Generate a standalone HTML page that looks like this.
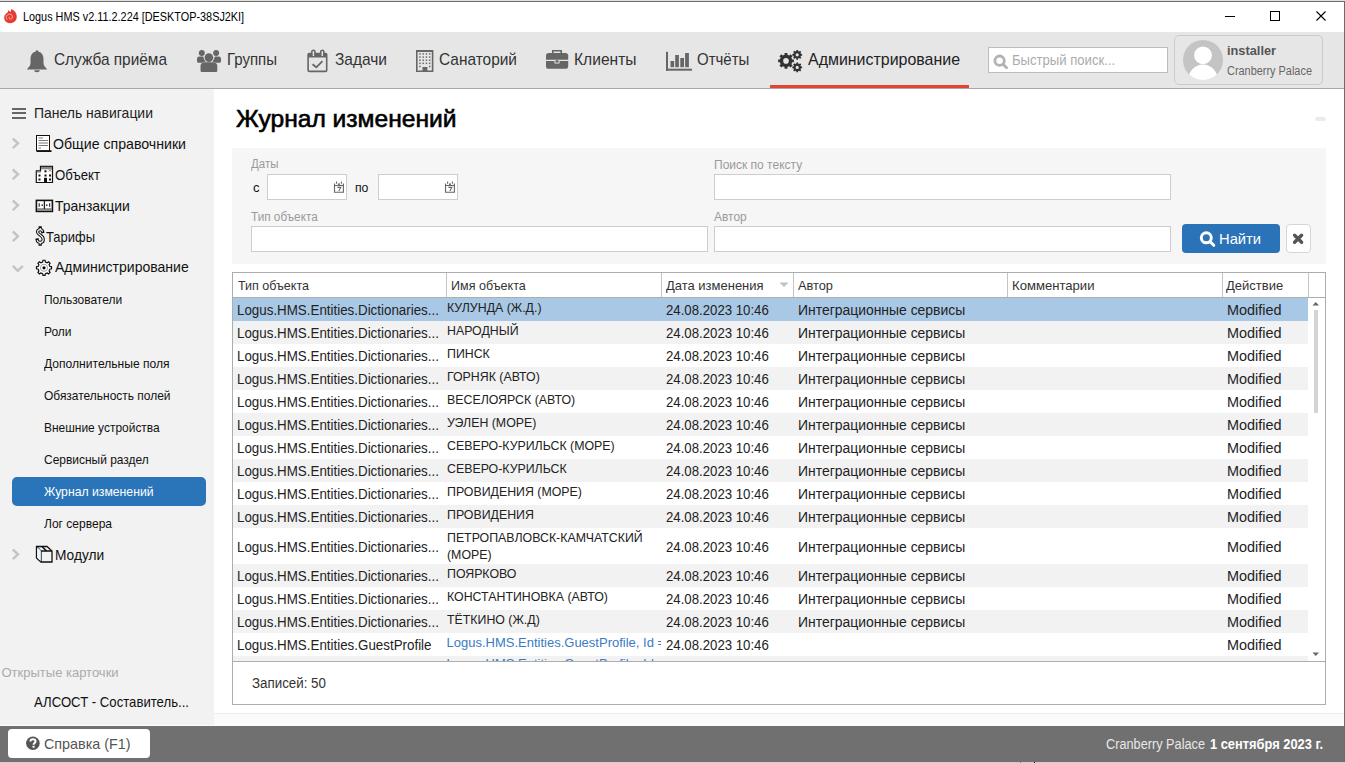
<!DOCTYPE html>
<html><head><meta charset="utf-8">
<style>
*{margin:0;padding:0;box-sizing:border-box}
html,body{width:1345px;height:763px;overflow:hidden;background:#fff;font-family:"Liberation Sans",sans-serif;color:#222;position:relative}
.a{position:absolute}
.t{position:absolute;white-space:nowrap;line-height:1}
svg{position:absolute;overflow:visible}
</style></head><body>
<div class="a" style="left:0px;top:0px;width:1345px;height:1px;background:#e0e0e0;"></div>
<div class="a" style="left:0px;top:1px;width:1345px;height:1px;background:#6f6f6f;"></div>
<svg style="left:3px;top:8px" width="15" height="16" viewBox="0 0 15 16"><g fill="#e43c35"><path d="M8.5 1 C13 3 15 8 13 12 C11.5 15 7 16 4 14.5 C1 13 0.5 9 2 7 C3 5 4.5 4.5 5 4 L5 2 C6 3 7 3.5 7.5 4 Z"/></g><g fill="none" stroke="#f7b0ab" stroke-width="0.9"><path d="M4.5 12 C2.5 10 3 7.5 5 6.5 C7 5.5 9.5 6.5 9.5 9 C9.5 10.5 8 11.5 6.8 11 C5.8 10.5 6 9 7 9"/></g></svg>
<div class="t" style="left:22.50px;top:10.80px;font-size:12px;color:#000;font-weight:400;transform:scaleX(0.905);transform-origin:0 0;">Logus HMS v2.11.2.224 [DESKTOP-38SJ2KI]</div>
<div class="a" style="left:1225px;top:16px;width:10px;height:1px;background:#000;"></div>
<div class="a" style="left:1270px;top:11px;width:10px;height:10px;background:transparent;border:1px solid #000;"></div>
<svg style="left:1316px;top:11px" width="10" height="10" viewBox="0 0 10 10"><path d="M0.5 0.5L9.5 9.5M9.5 0.5L0.5 9.5" stroke="#000" stroke-width="1.1"/></svg>
<div class="a" style="left:0px;top:32px;width:1344px;height:56px;background:#e6e6e6;"></div>
<div class="a" style="left:0px;top:88px;width:1344px;height:1px;background:#a8a8a8;"></div>
<div class="a" style="left:770px;top:85px;width:199px;height:3px;background:#e3432f;"></div>
<svg style="left:26px;top:49px" width="22" height="24" viewBox="0 0 22 24"><path fill="#666" d="M11 1.2 C11.9 1.2 12.3 1.8 12.3 2.5 C15.8 3.3 17.5 6.3 17.5 10 L17.5 14.5 C17.5 16.5 19.5 18.5 21.3 20.5 L0.7 20.5 C2.5 18.5 4.5 16.5 4.5 14.5 L4.5 10 C4.5 6.3 6.2 3.3 9.7 2.5 C9.7 1.8 10.1 1.2 11 1.2Z M8.2 21.3 L13.8 21.3 C13.8 23 12.6 23.2 11 23.2 C9.4 23.2 8.2 23 8.2 21.3Z"/></svg>
<div class="t" style="left:54.00px;top:51.15px;font-size:17px;color:#333;font-weight:400;transform:scaleX(0.906);transform-origin:0 0;">Служба приёма</div>
<svg style="left:196px;top:49px" width="26" height="24" viewBox="0 0 26 24"><g fill="#666"><circle cx="5.8" cy="3.9" r="3"/><circle cx="20.1" cy="3.9" r="3"/><circle cx="12.9" cy="8.6" r="4.3"/><path d="M1 9.5 C1 8 2.5 7.5 4 7.5 L7.2 7.5 C7.8 9.8 8.5 11.5 9.8 12.6 C8 13.3 7 13.8 6.5 13.8 L2.5 13.8 C1.5 13.8 1 13 1 12Z"/><path d="M25 9.5 C25 8 23.5 7.5 22 7.5 L18.8 7.5 C18.2 9.8 17.5 11.5 16.2 12.6 C18 13.3 19 13.8 19.5 13.8 L23.5 13.8 C24.5 13.8 25 13 25 12Z"/><path d="M4.5 17 C4.5 14.5 6.5 13.3 8.5 13.3 L17.3 13.3 C19.3 13.3 21.3 14.5 21.3 17 L21.3 21.5 C21.3 22.5 20.5 23 19.5 23 L6.3 23 C5.3 23 4.5 22.5 4.5 21.5Z"/></g></svg>
<div class="t" style="left:227.00px;top:51.15px;font-size:17px;color:#333;font-weight:400;transform:scaleX(0.883);transform-origin:0 0;">Группы</div>
<svg style="left:306px;top:49px" width="23" height="24" viewBox="0 0 23 24"><g fill="none" stroke="#666" stroke-width="1.6"><rect x="2.1" y="4.6" width="18.6" height="17.8" rx="1.2"/><path d="M5.9 6.5 L5.9 2.6 C5.9 1.6 6.6 1.3 7.4 1.3 C8.2 1.3 8.9 1.6 8.9 2.6 L8.9 6.5 M14.8 6.5 L14.8 2.6 C14.8 1.6 15.5 1.3 16.3 1.3 C17.1 1.3 17.8 1.6 17.8 2.6 L17.8 6.5"/><path d="M6.5 15.3 L10.3 18.3 L16.5 12.1" stroke-width="1.8"/></g><path fill="#666" d="M2.1 4 L20.7 4 L20.7 8.6 L2.1 8.6Z M5.1 4 L9.7 4 L9.7 6.8 L5.1 6.8Z"/><path fill="#e6e6e6" d="M6.7 3 L8.1 3 L8.1 7 L6.7 7Z M15.6 3 L17 3 L17 7 L15.6 7Z"/></svg>
<div class="t" style="left:334.50px;top:51.15px;font-size:17px;color:#333;font-weight:400;transform:scaleX(0.911);transform-origin:0 0;">Задачи</div>
<svg style="left:415px;top:49px" width="20" height="24" viewBox="0 0 20 24"><g fill="#666"><path d="M1 1 L18.4 1 L18.4 22.9 L1 22.9Z M2.6 3 L2.6 21.4 L7.5 21.4 L7.5 18 L12.4 18 L12.4 21.4 L16.8 21.4 L16.8 3Z"/><g><rect x="4.20" y="4.20" width="1.5" height="1.4"/><rect x="4.20" y="7.35" width="1.5" height="1.4"/><rect x="4.20" y="10.50" width="1.5" height="1.4"/><rect x="4.20" y="13.65" width="1.5" height="1.4"/><rect x="7.45" y="4.20" width="1.5" height="1.4"/><rect x="7.45" y="7.35" width="1.5" height="1.4"/><rect x="7.45" y="10.50" width="1.5" height="1.4"/><rect x="7.45" y="13.65" width="1.5" height="1.4"/><rect x="10.70" y="4.20" width="1.5" height="1.4"/><rect x="10.70" y="7.35" width="1.5" height="1.4"/><rect x="10.70" y="10.50" width="1.5" height="1.4"/><rect x="10.70" y="13.65" width="1.5" height="1.4"/><rect x="13.95" y="4.20" width="1.5" height="1.4"/><rect x="13.95" y="7.35" width="1.5" height="1.4"/><rect x="13.95" y="10.50" width="1.5" height="1.4"/><rect x="13.95" y="13.65" width="1.5" height="1.4"/><rect x="4.2" y="16.8" width="1.5" height="1.4"/><rect x="13.95" y="16.8" width="1.5" height="1.4"/></g></g></svg>
<div class="t" style="left:439.00px;top:51.15px;font-size:17px;color:#333;font-weight:400;transform:scaleX(0.908);transform-origin:0 0;">Санаторий</div>
<svg style="left:545px;top:49px" width="24" height="21" viewBox="0 0 24 21"><g fill="#666"><path d="M7 1 L17 1 L17 4.2 L15.4 4.2 L15.4 2.5 L8.6 2.5 L8.6 4.2 L7 4.2Z"/><path d="M1 6.5 C1 5 2 4 3.5 4 L20.5 4 C22 4 23.2 5 23.2 6.5 L23.2 10.8 L1 10.8Z"/><path d="M1 12 L9.5 12 L9.5 14.6 L14.5 14.6 L14.5 12 L23.2 12 L23.2 17.5 C23.2 19 22 19.8 20.5 19.8 L3.5 19.8 C2 19.8 1 19 1 17.5Z"/><rect x="10.5" y="11.2" width="3" height="2.4"/></g></svg>
<div class="t" style="left:573.50px;top:51.15px;font-size:17px;color:#333;font-weight:400;transform:scaleX(0.917);transform-origin:0 0;">Клиенты</div>
<svg style="left:665px;top:49px" width="28" height="23" viewBox="0 0 28 23"><g fill="#666"><rect x="1" y="2.8" width="2" height="19"/><rect x="1" y="19.7" width="26" height="2"/><rect x="5.5" y="12" width="3.6" height="6.2"/><rect x="10.2" y="6" width="3.7" height="12.2"/><rect x="15.3" y="9" width="3.7" height="9.2"/><rect x="20.1" y="4" width="3.8" height="14.2"/></g></svg>
<div class="t" style="left:697.00px;top:51.15px;font-size:17px;color:#333;font-weight:400;transform:scaleX(0.883);transform-origin:0 0;">Отчёты</div>
<svg style="left:776px;top:48px" width="28" height="26" viewBox="0 0 28 26"><path fill="#333" fill-rule="evenodd" d="M16.13 11.46 L17.86 11.44 L17.86 14.36 L16.13 14.34 L15.35 16.22 L16.60 17.43 L14.53 19.50 L13.32 18.25 L11.44 19.03 L11.46 20.76 L8.54 20.76 L8.56 19.03 L6.68 18.25 L5.47 19.50 L3.40 17.43 L4.65 16.22 L3.87 14.34 L2.14 14.36 L2.14 11.44 L3.87 11.46 L4.65 9.58 L3.40 8.37 L5.47 6.30 L6.68 7.55 L8.56 6.77 L8.54 5.04 L11.46 5.04 L11.44 6.77 L13.32 7.55 L14.53 6.30 L16.60 8.37 L15.35 9.58Z M12.80 12.90 A2.8 2.8 0 1 0 7.20 12.90 A2.8 2.8 0 1 0 12.80 12.90Z"/><path fill="#333" fill-rule="evenodd" d="M25.01 5.95 L26.12 5.92 L26.12 7.68 L25.01 7.65 L24.49 8.89 L25.30 9.66 L24.06 10.90 L23.29 10.09 L22.05 10.61 L22.08 11.72 L20.32 11.72 L20.35 10.61 L19.11 10.09 L18.34 10.90 L17.10 9.66 L17.91 8.89 L17.39 7.65 L16.28 7.68 L16.28 5.92 L17.39 5.95 L17.91 4.71 L17.10 3.94 L18.34 2.70 L19.11 3.51 L20.35 2.99 L20.32 1.88 L22.08 1.88 L22.05 2.99 L23.29 3.51 L24.06 2.70 L25.30 3.94 L24.49 4.71Z M22.80 6.80 A1.6 1.6 0 1 0 19.60 6.80 A1.6 1.6 0 1 0 22.80 6.80Z"/><path fill="#333" fill-rule="evenodd" d="M25.01 18.55 L26.12 18.52 L26.12 20.28 L25.01 20.25 L24.49 21.49 L25.30 22.26 L24.06 23.50 L23.29 22.69 L22.05 23.21 L22.08 24.32 L20.32 24.32 L20.35 23.21 L19.11 22.69 L18.34 23.50 L17.10 22.26 L17.91 21.49 L17.39 20.25 L16.28 20.28 L16.28 18.52 L17.39 18.55 L17.91 17.31 L17.10 16.54 L18.34 15.30 L19.11 16.11 L20.35 15.59 L20.32 14.48 L22.08 14.48 L22.05 15.59 L23.29 16.11 L24.06 15.30 L25.30 16.54 L24.49 17.31Z M22.80 19.40 A1.6 1.6 0 1 0 19.60 19.40 A1.6 1.6 0 1 0 22.80 19.40Z"/></svg>
<div class="t" style="left:807.50px;top:51.15px;font-size:17px;color:#222;font-weight:400;transform:scaleX(0.938);transform-origin:0 0;">Администрирование</div>
<div class="a" style="left:988px;top:47px;width:180px;height:26px;background:#fff;border:1px solid #bdbdbd;"></div>
<svg style="left:992px;top:54px" width="18" height="16" viewBox="0 0 18 16"><g fill="none" stroke="#b3b3b3" stroke-width="2.8"><circle cx="7.6" cy="6.7" r="4.7"/><path d="M11 10.2 L14.6 13.8" stroke-linecap="round"/></g></svg>
<div class="t" style="left:1011.50px;top:52.45px;font-size:15px;color:#ababab;font-weight:400;transform:scaleX(0.873);transform-origin:0 0;">Быстрый поиск...</div>
<div class="a" style="left:1174px;top:35px;width:149px;height:50px;background:#e6e6e6;border:1px solid #cbcbcb;border-radius:5px;"></div>
<svg style="left:1183px;top:40px" width="40" height="40" viewBox="0 0 40 40"><defs><clipPath id="av"><circle cx="20" cy="20" r="20"/></clipPath></defs><circle cx="20" cy="20" r="20" fill="#c4c4c4"/><g clip-path="url(#av)" fill="#fff"><circle cx="20" cy="15.3" r="8.9"/><ellipse cx="20" cy="41" rx="15" ry="16.5"/></g></svg>
<div class="t" style="left:1226.50px;top:43.75px;font-size:13px;color:#555;font-weight:700;transform:scaleX(0.983);transform-origin:0 0;">installer</div>
<div class="t" style="left:1226.50px;top:64.60px;font-size:12px;color:#666;font-weight:400;transform:scaleX(0.91);transform-origin:0 0;">Cranberry Palace</div>
<div class="a" style="left:1344px;top:1px;width:1px;height:762px;background:#6b6b6b;"></div>
<div class="a" style="left:0px;top:89px;width:214px;height:637px;background:#f2f2f2;"></div>
<div class="a" style="left:12px;top:108px;width:14px;height:2px;background:#666;"></div>
<div class="a" style="left:12px;top:112px;width:14px;height:2px;background:#666;"></div>
<div class="a" style="left:12px;top:117px;width:14px;height:2px;background:#666;"></div>
<div class="t" style="left:33.50px;top:104.95px;font-size:15px;color:#222;font-weight:400;transform:scaleX(0.931);transform-origin:0 0;">Панель навигации</div>
<svg style="left:11px;top:137px" width="10" height="13" viewBox="0 0 10 13"><path d="M1.8 1.5 L7 6.3 L1.8 11.1" fill="none" stroke="#c4c4c4" stroke-width="2.4"/></svg>
<svg style="left:11px;top:168px" width="10" height="13" viewBox="0 0 10 13"><path d="M1.8 1.5 L7 6.3 L1.8 11.1" fill="none" stroke="#c4c4c4" stroke-width="2.4"/></svg>
<svg style="left:11px;top:199px" width="10" height="13" viewBox="0 0 10 13"><path d="M1.8 1.5 L7 6.3 L1.8 11.1" fill="none" stroke="#c4c4c4" stroke-width="2.4"/></svg>
<svg style="left:11px;top:230px" width="10" height="13" viewBox="0 0 10 13"><path d="M1.8 1.5 L7 6.3 L1.8 11.1" fill="none" stroke="#c4c4c4" stroke-width="2.4"/></svg>
<svg style="left:11px;top:548px" width="10" height="13" viewBox="0 0 10 13"><path d="M1.8 1.5 L7 6.3 L1.8 11.1" fill="none" stroke="#c4c4c4" stroke-width="2.4"/></svg>
<svg style="left:11px;top:264px" width="14" height="10" viewBox="0 0 14 10"><path d="M1.8 1.8 L6.8 6.8 L11.8 1.8" fill="none" stroke="#c4c4c4" stroke-width="2.4"/></svg>
<svg style="left:35px;top:134px" width="18" height="19" viewBox="0 0 18 19"><rect x="1.5" y="1.5" width="13" height="15.5" fill="#fff" stroke="#111" stroke-width="1"/><g stroke="#777" stroke-width="1"><path d="M3.5 4 L8 4 M3.5 6.5 L13 6.5 M3.5 9 L13 9 M3.5 11.5 L13 11.5 M3.5 14 L6 14"/></g><path d="M2 16.2 L16.5 16.2 L16.5 18 L2 18Z" fill="#111"/></svg>
<div class="t" style="left:53.00px;top:135.95px;font-size:15px;color:#111;font-weight:400;transform:scaleX(0.943);transform-origin:0 0;">Общие справочники</div>
<svg style="left:35px;top:165px" width="19" height="19" viewBox="0 0 19 19"><path d="M5.5 1.3 L17.5 1.3 L17.5 17.5 L1.3 17.5 L1.3 5.8 L5.5 5.8Z" fill="#fff" stroke="#111" stroke-width="1.2"/><rect x="6" y="1.8" width="11" height="2.5" fill="#888"/><rect x="1.8" y="6" width="4" height="1.6" fill="#888"/><g fill="#111"><rect x="9.5" y="5.3" width="2" height="2"/><rect x="3.5" y="9.5" width="2" height="2"/><rect x="9.5" y="9.5" width="2" height="2"/><rect x="14" y="9.5" width="2" height="2"/><rect x="3.5" y="13.5" width="2" height="2"/><rect x="14" y="13.5" width="2" height="2"/><rect x="9" y="12.8" width="3" height="4.5"/></g><path d="M14 4.5 L16 6.5 M16 4.5 L14 6.5" stroke="#555" stroke-width=".8"/></svg>
<div class="t" style="left:55.00px;top:167.25px;font-size:15px;color:#111;font-weight:400;transform:scaleX(0.881);transform-origin:0 0;">Объект</div>
<svg style="left:35px;top:199px" width="19" height="14" viewBox="0 0 19 14"><rect x="1.4" y="1.4" width="16" height="11" fill="#fff" stroke="#111" stroke-width="1.6"/><rect x="2" y="9.2" width="15" height="2.6" fill="#888"/><path d="M9.4 2 L9.4 10" stroke="#222" stroke-width="1.3"/><g fill="#333"><rect x="3.6" y="4.2" width="1.2" height="3.6"/><rect x="6.5" y="5.5" width="1.5" height="1.5"/><rect x="11" y="5.5" width="1.5" height="1.5"/><rect x="14" y="4.2" width="1.2" height="3.6"/></g></svg>
<div class="t" style="left:55.00px;top:198.45px;font-size:15px;color:#111;font-weight:400;transform:scaleX(0.93);transform-origin:0 0;">Транзакции</div>
<svg style="left:35px;top:227px" width="11" height="19" viewBox="0 0 11 19"><path d="M7.6 4.6 C7.3 3.3 6.4 2.6 5.2 2.6 C3.6 2.6 2.6 3.6 2.6 5 C2.6 6.6 3.9 7.3 5.4 8.2 C7.1 9.2 8.2 10.2 8.2 12.4 C8.2 14.2 6.9 15.4 5.2 15.4 C3.6 15.4 2.5 14.5 2.2 13 M5.2 0.9 L5.2 2.6 M5.2 15.4 L5.2 17.2" fill="none" stroke="#111" stroke-width="3.3" stroke-linecap="square"/><path d="M7.6 4.6 C7.3 3.3 6.4 2.6 5.2 2.6 C3.6 2.6 2.6 3.6 2.6 5 C2.6 6.6 3.9 7.3 5.4 8.2 C7.1 9.2 8.2 10.2 8.2 12.4 C8.2 14.2 6.9 15.4 5.2 15.4 C3.6 15.4 2.5 14.5 2.2 13 M5.2 0.9 L5.2 2.6 M5.2 15.4 L5.2 17.2" fill="none" stroke="#fff" stroke-width="1.1"/></svg>
<div class="t" style="left:46.00px;top:229.25px;font-size:15px;color:#111;font-weight:400;transform:scaleX(0.864);transform-origin:0 0;">Тарифы</div>
<svg style="left:35px;top:259px" width="18" height="18" viewBox="0 0 18 18"><path d="M7.63 2.96 L7.95 1.27 L10.05 1.27 L10.37 2.96 L12.16 3.70 L13.58 2.74 L15.06 4.22 L14.10 5.64 L14.84 7.43 L16.53 7.75 L16.53 9.85 L14.84 10.17 L14.10 11.96 L15.06 13.38 L13.58 14.86 L12.16 13.90 L10.37 14.64 L10.05 16.33 L7.95 16.33 L7.63 14.64 L5.84 13.90 L4.42 14.86 L2.94 13.38 L3.90 11.96 L3.16 10.17 L1.47 9.85 L1.47 7.75 L3.16 7.43 L3.90 5.64 L2.94 4.22 L4.42 2.74 L5.84 3.70Z" fill="#fff" stroke="#111" stroke-width="1.2"/><circle cx="9" cy="8.8" r="3.6" fill="none" stroke="#999" stroke-width=".9"/><circle cx="9" cy="8.8" r="1.6" fill="#000"/></svg>
<div class="t" style="left:55.00px;top:259.25px;font-size:15px;color:#111;font-weight:400;transform:scaleX(0.935);transform-origin:0 0;">Администрирование</div>
<div class="a" style="left:12px;top:477px;width:194px;height:29px;background:#2a75b9;border-radius:5px;"></div>
<div class="t" style="left:43.50px;top:293.15px;font-size:13px;color:#111;font-weight:400;transform:scaleX(0.92);transform-origin:0 0;">Пользователи</div>
<div class="t" style="left:43.50px;top:325.15px;font-size:13px;color:#111;font-weight:400;transform:scaleX(0.92);transform-origin:0 0;">Роли</div>
<div class="t" style="left:43.50px;top:357.15px;font-size:13px;color:#111;font-weight:400;transform:scaleX(0.93);transform-origin:0 0;">Дополнительные поля</div>
<div class="t" style="left:43.50px;top:389.15px;font-size:13px;color:#111;font-weight:400;transform:scaleX(0.92);transform-origin:0 0;">Обязательность полей</div>
<div class="t" style="left:43.50px;top:421.15px;font-size:13px;color:#111;font-weight:400;transform:scaleX(0.92);transform-origin:0 0;">Внешние устройства</div>
<div class="t" style="left:43.50px;top:453.15px;font-size:13px;color:#111;font-weight:400;transform:scaleX(0.92);transform-origin:0 0;">Сервисный раздел</div>
<div class="t" style="left:43.50px;top:485.15px;font-size:13px;color:#fff;font-weight:400;transform:scaleX(0.94);transform-origin:0 0;">Журнал изменений</div>
<div class="t" style="left:43.50px;top:517.15px;font-size:13px;color:#111;font-weight:400;transform:scaleX(0.925);transform-origin:0 0;">Лог сервера</div>
<svg style="left:35px;top:545px" width="19" height="19" viewBox="0 0 19 19"><g fill="none" stroke="#111" stroke-width="1.3"><path d="M1.5 1.5 L12 1.5 L17 6 L17 17 L6 17 L1.5 13Z"/><path d="M1.5 1.5 L6 6 L17 6 M6 6 L6 17"/><path d="M7 1.5 L11.5 6" stroke-width="1.6"/></g><path d="M2.2 2.2 L5.8 5.5 L5.8 16.3 L2.2 12.7Z" fill="#e8f4ff"/></svg>
<div class="t" style="left:55.00px;top:547.25px;font-size:15px;color:#111;font-weight:400;transform:scaleX(0.916);transform-origin:0 0;">Модули</div>
<div class="t" style="left:1.50px;top:665.95px;font-size:13px;color:#ababab;font-weight:400;">Открытые карточки</div>
<div class="t" style="left:33.50px;top:694.25px;font-size:15px;color:#111;font-weight:400;transform:scaleX(0.876);transform-origin:0 0;">АЛСОСТ - Составитель...</div>
<div class="t" style="left:236.00px;top:106.60px;font-size:24px;color:#000;font-weight:400;transform:scaleX(1.025);transform-origin:0 0;-webkit-text-stroke:0.6px #000;">Журнал изменений</div>
<div class="a" style="left:1315px;top:117px;width:11px;height:4px;background:#ebebeb;border-radius:2px;"></div>
<div class="a" style="left:232px;top:148px;width:1094px;height:116px;background:#f6f6f6;"></div>
<div class="t" style="left:251.00px;top:158.30px;font-size:12px;color:#9a9a9a;font-weight:400;transform:scaleX(0.958);transform-origin:0 0;">Даты</div>
<div class="t" style="left:253.00px;top:180.95px;font-size:13px;color:#111;font-weight:400;">с</div>
<div class="a" style="left:267px;top:174px;width:80px;height:26px;background:#fff;border:1px solid #cdcdcd;"></div>
<div class="t" style="left:355.00px;top:180.95px;font-size:13px;color:#111;font-weight:400;transform:scaleX(0.94);transform-origin:0 0;">по</div>
<div class="a" style="left:378px;top:174px;width:80px;height:26px;background:#fff;border:1px solid #cdcdcd;"></div>
<svg style="left:333px;top:181px" width="12" height="13" viewBox="0 0 12 13"><g fill="none" stroke="#666" stroke-width="1.1"><path d="M1.5 2.6 L1.5 11.3 L10.4 11.3 L10.4 2.6"/><path d="M1.5 4.5 L10.4 4.5"/><path d="M3.6 0.4 L3.6 2.8 M8.4 0.4 L8.4 2.8"/><path d="M4.4 6.4 L7.8 6.4 L5.8 10"/></g><rect x="5.1" y="2.4" width="1.8" height="2" fill="#666"/></svg>
<svg style="left:444px;top:181px" width="12" height="13" viewBox="0 0 12 13"><g fill="none" stroke="#666" stroke-width="1.1"><path d="M1.5 2.6 L1.5 11.3 L10.4 11.3 L10.4 2.6"/><path d="M1.5 4.5 L10.4 4.5"/><path d="M3.6 0.4 L3.6 2.8 M8.4 0.4 L8.4 2.8"/><path d="M4.4 6.4 L7.8 6.4 L5.8 10"/></g><rect x="5.1" y="2.4" width="1.8" height="2" fill="#666"/></svg>
<div class="t" style="left:251.00px;top:210.70px;font-size:12px;color:#9a9a9a;font-weight:400;transform:scaleX(0.98);transform-origin:0 0;">Тип объекта</div>
<div class="a" style="left:251px;top:226px;width:457px;height:26px;background:#fff;border:1px solid #cdcdcd;"></div>
<div class="t" style="left:714.00px;top:158.80px;font-size:12px;color:#9a9a9a;font-weight:400;">Поиск по тексту</div>
<div class="a" style="left:714px;top:174px;width:457px;height:26px;background:#fff;border:1px solid #cdcdcd;"></div>
<div class="t" style="left:714.00px;top:211.00px;font-size:12px;color:#9a9a9a;font-weight:400;transform:scaleX(0.996);transform-origin:0 0;">Автор</div>
<div class="a" style="left:714px;top:226px;width:457px;height:26px;background:#fff;border:1px solid #cdcdcd;"></div>
<div class="a" style="left:1182px;top:224px;width:98px;height:29px;background:#2a73b8;border-radius:4px;"></div>
<svg style="left:1198px;top:230px" width="20" height="18" viewBox="0 0 20 18"><g fill="none" stroke="#fff" stroke-width="3"><circle cx="8.3" cy="7.8" r="5"/><path d="M12 11.6 L15.8 15.3" stroke-linecap="round"/></g></svg>
<div class="t" style="left:1219.00px;top:230.75px;font-size:15px;color:#fff;font-weight:400;transform:scaleX(0.981);transform-origin:0 0;">Найти</div>
<div class="a" style="left:1286px;top:224px;width:25px;height:29px;background:#fff;border:1px solid #d6d6d6;border-radius:4px;"></div>
<svg style="left:1292px;top:233px" width="12" height="11" viewBox="0 0 12 11"><path d="M2.6 2.2 L9.6 9.2 M9.6 2.2 L2.6 9.2" stroke="#555" stroke-width="3.4" stroke-linecap="round"/></svg>
<div class="a" style="left:232px;top:272px;width:1094px;height:433px;background:#fff;border:1px solid #adadad;"></div>
<div class="a" style="left:233px;top:297px;width:1092px;height:1px;background:#adadad;"></div>
<div class="a" style="left:446px;top:273px;width:1px;height:24px;background:#c4c4c4;"></div>
<div class="a" style="left:661px;top:273px;width:1px;height:24px;background:#c4c4c4;"></div>
<div class="a" style="left:793px;top:273px;width:1px;height:24px;background:#c4c4c4;"></div>
<div class="a" style="left:1007px;top:273px;width:1px;height:24px;background:#c4c4c4;"></div>
<div class="a" style="left:1222px;top:273px;width:1px;height:24px;background:#c4c4c4;"></div>
<div class="a" style="left:1308px;top:273px;width:1px;height:24px;background:#c4c4c4;"></div>
<div class="t" style="left:237.50px;top:279.12px;font-size:13.5px;color:#333;font-weight:400;transform:scaleX(0.927);transform-origin:0 0;">Тип объекта</div>
<div class="t" style="left:450.50px;top:279.12px;font-size:13.5px;color:#333;font-weight:400;transform:scaleX(0.93);transform-origin:0 0;">Имя объекта</div>
<div class="t" style="left:665.50px;top:279.12px;font-size:13.5px;color:#333;font-weight:400;transform:scaleX(0.962);transform-origin:0 0;">Дата изменения</div>
<div class="t" style="left:797.50px;top:279.12px;font-size:13.5px;color:#333;font-weight:400;transform:scaleX(0.947);transform-origin:0 0;">Автор</div>
<div class="t" style="left:1011.50px;top:279.12px;font-size:13.5px;color:#333;font-weight:400;transform:scaleX(0.97);transform-origin:0 0;">Комментарии</div>
<div class="t" style="left:1226.00px;top:279.12px;font-size:13.5px;color:#333;font-weight:400;transform:scaleX(0.964);transform-origin:0 0;">Действие</div>
<svg style="left:779px;top:282px" width="10" height="6" viewBox="0 0 10 6"><path d="M0.5 0.5 L9.5 0.5 L5 5Z" fill="#c0c0c0"/></svg>
<div class="a" style="left:233px;top:298px;width:1075px;height:363px;overflow:hidden">
<div class="a" style="left:0px;top:0px;width:1075px;height:23px;background:#a9c8e5;"></div>
<div class="t" style="left:3.50px;top:5.10px;font-size:14px;color:#222;font-weight:400;transform:scaleX(0.954);transform-origin:0 0;">Logus.HMS.Entities.Dictionaries...</div>
<div class="t" style="left:213.50px;top:3.45px;font-size:13px;color:#222;font-weight:400;transform:scaleX(0.95);transform-origin:0 0;">КУЛУНДА (Ж.Д.)</div>
<div class="t" style="left:432.50px;top:5.10px;font-size:14px;color:#222;font-weight:400;transform:scaleX(0.943);transform-origin:0 0;">24.08.2023 10:46</div>
<div class="t" style="left:564.50px;top:5.10px;font-size:14px;color:#222;font-weight:400;transform:scaleX(0.994);transform-origin:0 0;">Интеграционные сервисы</div>
<div class="t" style="left:993.50px;top:5.10px;font-size:14px;color:#222;font-weight:400;transform:scaleX(1.03);transform-origin:0 0;">Modified</div>
<div class="a" style="left:0px;top:23px;width:1075px;height:23px;background:#f2f2f2;"></div>
<div class="t" style="left:3.50px;top:28.10px;font-size:14px;color:#222;font-weight:400;transform:scaleX(0.954);transform-origin:0 0;">Logus.HMS.Entities.Dictionaries...</div>
<div class="t" style="left:213.50px;top:26.45px;font-size:13px;color:#222;font-weight:400;transform:scaleX(0.95);transform-origin:0 0;">НАРОДНЫЙ</div>
<div class="t" style="left:432.50px;top:28.10px;font-size:14px;color:#222;font-weight:400;transform:scaleX(0.943);transform-origin:0 0;">24.08.2023 10:46</div>
<div class="t" style="left:564.50px;top:28.10px;font-size:14px;color:#222;font-weight:400;transform:scaleX(0.994);transform-origin:0 0;">Интеграционные сервисы</div>
<div class="t" style="left:993.50px;top:28.10px;font-size:14px;color:#222;font-weight:400;transform:scaleX(1.03);transform-origin:0 0;">Modified</div>
<div class="a" style="left:0px;top:46px;width:1075px;height:23px;background:#fff;"></div>
<div class="t" style="left:3.50px;top:51.10px;font-size:14px;color:#222;font-weight:400;transform:scaleX(0.954);transform-origin:0 0;">Logus.HMS.Entities.Dictionaries...</div>
<div class="t" style="left:213.50px;top:49.45px;font-size:13px;color:#222;font-weight:400;transform:scaleX(0.95);transform-origin:0 0;">ПИНСК</div>
<div class="t" style="left:432.50px;top:51.10px;font-size:14px;color:#222;font-weight:400;transform:scaleX(0.943);transform-origin:0 0;">24.08.2023 10:46</div>
<div class="t" style="left:564.50px;top:51.10px;font-size:14px;color:#222;font-weight:400;transform:scaleX(0.994);transform-origin:0 0;">Интеграционные сервисы</div>
<div class="t" style="left:993.50px;top:51.10px;font-size:14px;color:#222;font-weight:400;transform:scaleX(1.03);transform-origin:0 0;">Modified</div>
<div class="a" style="left:0px;top:69px;width:1075px;height:23px;background:#f2f2f2;"></div>
<div class="t" style="left:3.50px;top:74.10px;font-size:14px;color:#222;font-weight:400;transform:scaleX(0.954);transform-origin:0 0;">Logus.HMS.Entities.Dictionaries...</div>
<div class="t" style="left:213.50px;top:72.45px;font-size:13px;color:#222;font-weight:400;transform:scaleX(0.95);transform-origin:0 0;">ГОРНЯК (АВТО)</div>
<div class="t" style="left:432.50px;top:74.10px;font-size:14px;color:#222;font-weight:400;transform:scaleX(0.943);transform-origin:0 0;">24.08.2023 10:46</div>
<div class="t" style="left:564.50px;top:74.10px;font-size:14px;color:#222;font-weight:400;transform:scaleX(0.994);transform-origin:0 0;">Интеграционные сервисы</div>
<div class="t" style="left:993.50px;top:74.10px;font-size:14px;color:#222;font-weight:400;transform:scaleX(1.03);transform-origin:0 0;">Modified</div>
<div class="a" style="left:0px;top:92px;width:1075px;height:23px;background:#fff;"></div>
<div class="t" style="left:3.50px;top:97.10px;font-size:14px;color:#222;font-weight:400;transform:scaleX(0.954);transform-origin:0 0;">Logus.HMS.Entities.Dictionaries...</div>
<div class="t" style="left:213.50px;top:95.45px;font-size:13px;color:#222;font-weight:400;transform:scaleX(0.95);transform-origin:0 0;">ВЕСЕЛОЯРСК (АВТО)</div>
<div class="t" style="left:432.50px;top:97.10px;font-size:14px;color:#222;font-weight:400;transform:scaleX(0.943);transform-origin:0 0;">24.08.2023 10:46</div>
<div class="t" style="left:564.50px;top:97.10px;font-size:14px;color:#222;font-weight:400;transform:scaleX(0.994);transform-origin:0 0;">Интеграционные сервисы</div>
<div class="t" style="left:993.50px;top:97.10px;font-size:14px;color:#222;font-weight:400;transform:scaleX(1.03);transform-origin:0 0;">Modified</div>
<div class="a" style="left:0px;top:115px;width:1075px;height:23px;background:#f2f2f2;"></div>
<div class="t" style="left:3.50px;top:120.10px;font-size:14px;color:#222;font-weight:400;transform:scaleX(0.954);transform-origin:0 0;">Logus.HMS.Entities.Dictionaries...</div>
<div class="t" style="left:213.50px;top:118.45px;font-size:13px;color:#222;font-weight:400;transform:scaleX(0.95);transform-origin:0 0;">УЭЛЕН (МОРЕ)</div>
<div class="t" style="left:432.50px;top:120.10px;font-size:14px;color:#222;font-weight:400;transform:scaleX(0.943);transform-origin:0 0;">24.08.2023 10:46</div>
<div class="t" style="left:564.50px;top:120.10px;font-size:14px;color:#222;font-weight:400;transform:scaleX(0.994);transform-origin:0 0;">Интеграционные сервисы</div>
<div class="t" style="left:993.50px;top:120.10px;font-size:14px;color:#222;font-weight:400;transform:scaleX(1.03);transform-origin:0 0;">Modified</div>
<div class="a" style="left:0px;top:138px;width:1075px;height:23px;background:#fff;"></div>
<div class="t" style="left:3.50px;top:143.10px;font-size:14px;color:#222;font-weight:400;transform:scaleX(0.954);transform-origin:0 0;">Logus.HMS.Entities.Dictionaries...</div>
<div class="t" style="left:213.50px;top:141.45px;font-size:13px;color:#222;font-weight:400;transform:scaleX(0.95);transform-origin:0 0;">СЕВЕРО-КУРИЛЬСК (МОРЕ)</div>
<div class="t" style="left:432.50px;top:143.10px;font-size:14px;color:#222;font-weight:400;transform:scaleX(0.943);transform-origin:0 0;">24.08.2023 10:46</div>
<div class="t" style="left:564.50px;top:143.10px;font-size:14px;color:#222;font-weight:400;transform:scaleX(0.994);transform-origin:0 0;">Интеграционные сервисы</div>
<div class="t" style="left:993.50px;top:143.10px;font-size:14px;color:#222;font-weight:400;transform:scaleX(1.03);transform-origin:0 0;">Modified</div>
<div class="a" style="left:0px;top:161px;width:1075px;height:23px;background:#f2f2f2;"></div>
<div class="t" style="left:3.50px;top:166.10px;font-size:14px;color:#222;font-weight:400;transform:scaleX(0.954);transform-origin:0 0;">Logus.HMS.Entities.Dictionaries...</div>
<div class="t" style="left:213.50px;top:164.45px;font-size:13px;color:#222;font-weight:400;transform:scaleX(0.95);transform-origin:0 0;">СЕВЕРО-КУРИЛЬСК</div>
<div class="t" style="left:432.50px;top:166.10px;font-size:14px;color:#222;font-weight:400;transform:scaleX(0.943);transform-origin:0 0;">24.08.2023 10:46</div>
<div class="t" style="left:564.50px;top:166.10px;font-size:14px;color:#222;font-weight:400;transform:scaleX(0.994);transform-origin:0 0;">Интеграционные сервисы</div>
<div class="t" style="left:993.50px;top:166.10px;font-size:14px;color:#222;font-weight:400;transform:scaleX(1.03);transform-origin:0 0;">Modified</div>
<div class="a" style="left:0px;top:184px;width:1075px;height:23px;background:#fff;"></div>
<div class="t" style="left:3.50px;top:189.10px;font-size:14px;color:#222;font-weight:400;transform:scaleX(0.954);transform-origin:0 0;">Logus.HMS.Entities.Dictionaries...</div>
<div class="t" style="left:213.50px;top:187.45px;font-size:13px;color:#222;font-weight:400;transform:scaleX(0.95);transform-origin:0 0;">ПРОВИДЕНИЯ (МОРЕ)</div>
<div class="t" style="left:432.50px;top:189.10px;font-size:14px;color:#222;font-weight:400;transform:scaleX(0.943);transform-origin:0 0;">24.08.2023 10:46</div>
<div class="t" style="left:564.50px;top:189.10px;font-size:14px;color:#222;font-weight:400;transform:scaleX(0.994);transform-origin:0 0;">Интеграционные сервисы</div>
<div class="t" style="left:993.50px;top:189.10px;font-size:14px;color:#222;font-weight:400;transform:scaleX(1.03);transform-origin:0 0;">Modified</div>
<div class="a" style="left:0px;top:207px;width:1075px;height:23px;background:#f2f2f2;"></div>
<div class="t" style="left:3.50px;top:212.10px;font-size:14px;color:#222;font-weight:400;transform:scaleX(0.954);transform-origin:0 0;">Logus.HMS.Entities.Dictionaries...</div>
<div class="t" style="left:213.50px;top:210.45px;font-size:13px;color:#222;font-weight:400;transform:scaleX(0.95);transform-origin:0 0;">ПРОВИДЕНИЯ</div>
<div class="t" style="left:432.50px;top:212.10px;font-size:14px;color:#222;font-weight:400;transform:scaleX(0.943);transform-origin:0 0;">24.08.2023 10:46</div>
<div class="t" style="left:564.50px;top:212.10px;font-size:14px;color:#222;font-weight:400;transform:scaleX(0.994);transform-origin:0 0;">Интеграционные сервисы</div>
<div class="t" style="left:993.50px;top:212.10px;font-size:14px;color:#222;font-weight:400;transform:scaleX(1.03);transform-origin:0 0;">Modified</div>
<div class="a" style="left:0px;top:230px;width:1075px;height:36px;background:#fff;"></div>
<div class="t" style="left:3.50px;top:241.60px;font-size:14px;color:#222;font-weight:400;transform:scaleX(0.954);transform-origin:0 0;">Logus.HMS.Entities.Dictionaries...</div>
<div class="t" style="left:213.50px;top:232.75px;font-size:13px;color:#222;font-weight:400;transform:scaleX(0.95);transform-origin:0 0;">ПЕТРОПАВЛОВСК-КАМЧАТСКИЙ</div>
<div class="t" style="left:213.50px;top:250.15px;font-size:13px;color:#222;font-weight:400;transform:scaleX(0.95);transform-origin:0 0;">(МОРЕ)</div>
<div class="t" style="left:432.50px;top:241.60px;font-size:14px;color:#222;font-weight:400;transform:scaleX(0.943);transform-origin:0 0;">24.08.2023 10:46</div>
<div class="t" style="left:564.50px;top:241.60px;font-size:14px;color:#222;font-weight:400;transform:scaleX(0.994);transform-origin:0 0;">Интеграционные сервисы</div>
<div class="t" style="left:993.50px;top:241.60px;font-size:14px;color:#222;font-weight:400;transform:scaleX(1.03);transform-origin:0 0;">Modified</div>
<div class="a" style="left:0px;top:266px;width:1075px;height:23px;background:#f2f2f2;"></div>
<div class="t" style="left:3.50px;top:271.10px;font-size:14px;color:#222;font-weight:400;transform:scaleX(0.954);transform-origin:0 0;">Logus.HMS.Entities.Dictionaries...</div>
<div class="t" style="left:213.50px;top:269.45px;font-size:13px;color:#222;font-weight:400;transform:scaleX(0.95);transform-origin:0 0;">ПОЯРКОВО</div>
<div class="t" style="left:432.50px;top:271.10px;font-size:14px;color:#222;font-weight:400;transform:scaleX(0.943);transform-origin:0 0;">24.08.2023 10:46</div>
<div class="t" style="left:564.50px;top:271.10px;font-size:14px;color:#222;font-weight:400;transform:scaleX(0.994);transform-origin:0 0;">Интеграционные сервисы</div>
<div class="t" style="left:993.50px;top:271.10px;font-size:14px;color:#222;font-weight:400;transform:scaleX(1.03);transform-origin:0 0;">Modified</div>
<div class="a" style="left:0px;top:289px;width:1075px;height:23px;background:#fff;"></div>
<div class="t" style="left:3.50px;top:294.10px;font-size:14px;color:#222;font-weight:400;transform:scaleX(0.954);transform-origin:0 0;">Logus.HMS.Entities.Dictionaries...</div>
<div class="t" style="left:213.50px;top:292.45px;font-size:13px;color:#222;font-weight:400;transform:scaleX(0.95);transform-origin:0 0;">КОНСТАНТИНОВКА (АВТО)</div>
<div class="t" style="left:432.50px;top:294.10px;font-size:14px;color:#222;font-weight:400;transform:scaleX(0.943);transform-origin:0 0;">24.08.2023 10:46</div>
<div class="t" style="left:564.50px;top:294.10px;font-size:14px;color:#222;font-weight:400;transform:scaleX(0.994);transform-origin:0 0;">Интеграционные сервисы</div>
<div class="t" style="left:993.50px;top:294.10px;font-size:14px;color:#222;font-weight:400;transform:scaleX(1.03);transform-origin:0 0;">Modified</div>
<div class="a" style="left:0px;top:312px;width:1075px;height:23px;background:#f2f2f2;"></div>
<div class="t" style="left:3.50px;top:317.10px;font-size:14px;color:#222;font-weight:400;transform:scaleX(0.954);transform-origin:0 0;">Logus.HMS.Entities.Dictionaries...</div>
<div class="t" style="left:213.50px;top:315.45px;font-size:13px;color:#222;font-weight:400;transform:scaleX(0.95);transform-origin:0 0;">ТЁТКИНО (Ж.Д)</div>
<div class="t" style="left:432.50px;top:317.10px;font-size:14px;color:#222;font-weight:400;transform:scaleX(0.943);transform-origin:0 0;">24.08.2023 10:46</div>
<div class="t" style="left:564.50px;top:317.10px;font-size:14px;color:#222;font-weight:400;transform:scaleX(0.994);transform-origin:0 0;">Интеграционные сервисы</div>
<div class="t" style="left:993.50px;top:317.10px;font-size:14px;color:#222;font-weight:400;transform:scaleX(1.03);transform-origin:0 0;">Modified</div>
<div class="a" style="left:0px;top:335px;width:1075px;height:23px;background:#fff;"></div>
<div class="t" style="left:3.50px;top:340.10px;font-size:14px;color:#222;font-weight:400;transform:scaleX(0.954);transform-origin:0 0;">Logus.HMS.Entities.GuestProfile</div>
<div class="t" style="left:213.50px;top:338.45px;font-size:13px;color:#3b7bc4;font-weight:400;width:214px;overflow:hidden;padding-bottom:4px;">Logus.HMS.Entities.GuestProfile, Id =</div>
<div class="t" style="left:432.50px;top:340.10px;font-size:14px;color:#222;font-weight:400;transform:scaleX(0.943);transform-origin:0 0;">24.08.2023 10:46</div>
<div class="t" style="left:993.50px;top:340.10px;font-size:14px;color:#222;font-weight:400;transform:scaleX(1.03);transform-origin:0 0;">Modified</div>
<div class="a" style="left:0px;top:358px;width:1075px;height:23px;background:#f2f2f2;"></div>
<div class="t" style="left:213.50px;top:359.45px;font-size:13px;color:#3b7bc4;font-weight:400;width:214px;overflow:hidden;padding-bottom:4px;">Logus.HMS.Entities.GuestProfile, Id =</div>
</div>
<svg style="left:1312px;top:301px" width="8" height="5" viewBox="0 0 8 5"><path d="M0.5 4.5 L3.75 1 L7 4.5Z" fill="#666"/></svg>
<div class="a" style="left:1314px;top:310px;width:4px;height:103px;background:#d4d4d4;"></div>
<svg style="left:1312px;top:652px" width="8" height="5" viewBox="0 0 8 5"><path d="M0.5 0.5 L3.75 4 L7 0.5Z" fill="#666"/></svg>
<div class="a" style="left:233px;top:661px;width:1092px;height:1px;background:#adadad;"></div>
<div class="t" style="left:252.00px;top:676.10px;font-size:14px;color:#333;font-weight:400;transform:scaleX(0.953);transform-origin:0 0;">Записей: 50</div>
<div class="a" style="left:214px;top:713px;width:1130px;height:1px;background:#ececec;"></div>
<div class="a" style="left:214px;top:714px;width:1130px;height:11px;background:#fafafa;"></div>
<div class="a" style="left:214px;top:725px;width:1130px;height:1px;background:#fdfdfd;"></div>
<div class="a" style="left:0px;top:725px;width:214px;height:1px;background:#fbfbfb;"></div>
<div class="a" style="left:0px;top:726px;width:1344px;height:36px;background:#707070;"></div>
<div class="a" style="left:8px;top:729px;width:142px;height:29px;background:#fff;border-radius:4px;"></div>
<svg style="left:25px;top:736px" width="16" height="15" viewBox="0 0 16 15"><circle cx="7.9" cy="7.2" r="6.8" fill="#555"/><path d="M5.4 5.6 C5.4 4 6.5 3.2 7.9 3.2 C9.4 3.2 10.5 4.1 10.5 5.4 C10.5 7 8.6 7.2 8.6 8.8" fill="none" stroke="#fff" stroke-width="2"/><rect x="7.5" y="9.8" width="2.1" height="1.9" fill="#fff"/></svg>
<div class="t" style="left:44.00px;top:736.05px;font-size:15px;color:#555;font-weight:400;transform:scaleX(0.956);transform-origin:0 0;">Справка (F1)</div>
<div class="t" style="left:1105.50px;top:736.90px;font-size:14px;color:#e8e8e8;font-weight:400;transform:scaleX(0.909);transform-origin:0 0;">Cranberry Palace</div>
<div class="t" style="left:1209.50px;top:736.90px;font-size:14px;color:#fff;font-weight:700;transform:scaleX(0.918);transform-origin:0 0;">1 сентября 2023 г.</div>
<div class="a" style="left:0px;top:762px;width:1345px;height:1px;background:#d0d0d0;"></div>
<div class="a" style="left:1034px;top:762px;width:1px;height:1px;background:#000;"></div>
<div class="a" style="left:1020px;top:762px;width:1px;height:1px;background:#888;"></div>
</body></html>
